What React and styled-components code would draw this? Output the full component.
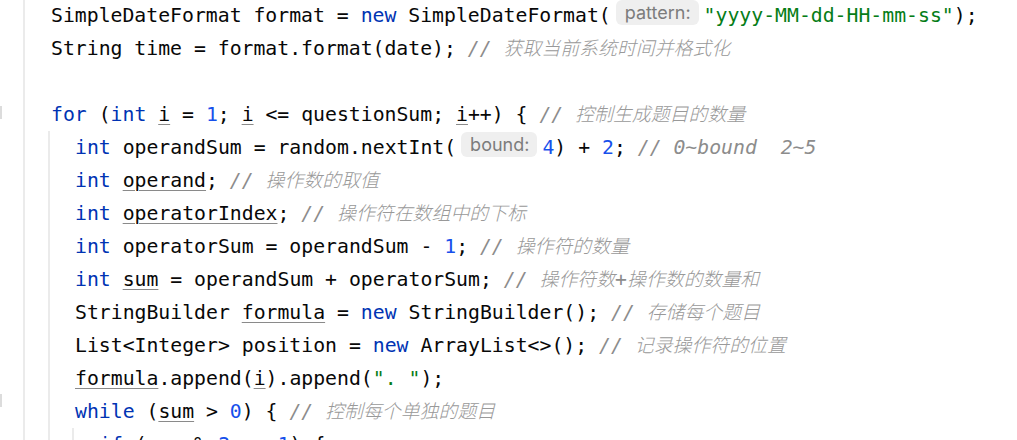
import styled, { createGlobalStyle } from "styled-components";

const GlobalStyle = createGlobalStyle`
  html, body {
    margin: 0;
    padding: 0;
    background: #fff;
  }
`;

const Editor = styled.div`
  display: flex;
  width: 1017px;
  height: 440px;
  overflow: hidden;
  background: #fff;
`;

const Gutter = styled.div`
  width: 23px;
  flex-shrink: 0;
  border-right: 2px solid #ebebeb;
  display: flex;
  flex-direction: column;
  margin-top: -1px;
`;

const GutterRow = styled.div`
  height: 33px;
  flex-shrink: 0;
  position: relative;
`;

const FoldMark = styled.span`
  position: absolute;
  left: 0;
  top: ${(p) => p.$top}px;
  width: 2px;
  height: 13px;
  background: #dcdcdc;
`;

const Code = styled.div`
  flex: 1;
  padding-left: 23px;
  margin-top: -1.5px;
  font-family: "DejaVu Sans Mono", "Noto Sans CJK SC", monospace;
  font-size: 19.8px;
  color: #080808;
`;

const Line = styled.div`
  height: 33px;
  line-height: 33px;
  padding-left: 3px;
  white-space: pre;
`;

const Block = styled.div`
  border-left: 2px solid #ebebeb;
  padding-left: 22px;
`;

const Kw = styled.span`
  color: #0033b3;
`;

const Num = styled.span`
  color: #1750eb;
`;

const Str = styled.span`
  color: #067d17;
`;

const Var = styled.span`
  text-decoration: underline;
  text-decoration-color: #8a8a8a;
  text-decoration-thickness: 1px;
  text-underline-offset: 3px;
`;

const Comment = styled.span`
  color: #8c8c8c;
  font-style: italic;
`;

const Cjk = styled.span`
  font-family: "Noto Sans CJK SC", sans-serif;
  font-size: 18.9px;
  font-weight: 300;
  line-height: 20px;
  color: #999;
`;

const Hint = styled.span`
  display: inline-block;
  margin: 0 5px;
  padding: 0 8px 0 9px;
  background: #efefef;
  border-radius: 6px;
  font-family: Inter, "Noto Sans", sans-serif;
  font-size: 18px;
  line-height: 25px;
  color: #7c7c7c;
  vertical-align: 3px;
`;

function Note({ children }) {
  const parts = children.split(/([\u4e00-\u9fff]+)/);
  return (
    <Comment>
      {parts.map((part, i) =>
        /[\u4e00-\u9fff]/.test(part) ? <Cjk key={i}>{part}</Cjk> : part
      )}
    </Comment>
  );
}

const gutterMarks = { 3: 8, 12: -1 };

export default function App() {
  return (
    <>
      <GlobalStyle />
      <Editor>
        <Gutter>
          {Array.from({ length: 14 }).map((_, i) => (
            <GutterRow key={i}>
              {gutterMarks[i] !== undefined && <FoldMark $top={gutterMarks[i]} />}
            </GutterRow>
          ))}
        </Gutter>
        <Code>
          <Line>
            SimpleDateFormat format = <Kw>new</Kw> SimpleDateFormat(
            <Hint>pattern:</Hint>
            <Str>"yyyy-MM-dd-HH-mm-ss"</Str>);
          </Line>
          <Line>
            String time = format.format(date); <Note>// 获取当前系统时间并格式化</Note>
          </Line>
          <Line> </Line>
          <Line>
            <Kw>for</Kw> (<Kw>int</Kw> <Var>i</Var> = <Num>1</Num>; <Var>i</Var> &lt;= questionSum;{" "}
            <Var>i</Var>++) {"{"} <Note>// 控制生成题目的数量</Note>
          </Line>
          <Block>
            <Line>
              <Kw>int</Kw> operandSum = random.nextInt(
              <Hint>bound:</Hint>
              <Num>4</Num>) + <Num>2</Num>; <Note>// 0~bound  2~5</Note>
            </Line>
            <Line>
              <Kw>int</Kw> <Var>operand</Var>; <Note>// 操作数的取值</Note>
            </Line>
            <Line>
              <Kw>int</Kw> <Var>operatorIndex</Var>; <Note>// 操作符在数组中的下标</Note>
            </Line>
            <Line>
              <Kw>int</Kw> operatorSum = operandSum - <Num>1</Num>; <Note>// 操作符的数量</Note>
            </Line>
            <Line>
              <Kw>int</Kw> <Var>sum</Var> = operandSum + operatorSum;{" "}
              <Note>// 操作符数+操作数的数量和</Note>
            </Line>
            <Line>
              StringBuilder <Var>formula</Var> = <Kw>new</Kw> StringBuilder();{" "}
              <Note>// 存储每个题目</Note>
            </Line>
            <Line>
              List&lt;Integer&gt; position = <Kw>new</Kw> ArrayList&lt;&gt;();{" "}
              <Note>// 记录操作符的位置</Note>
            </Line>
            <Line>
              <Var>formula</Var>.append(<Var>i</Var>).append(<Str>". "</Str>);
            </Line>
            <Line>
              <Kw>while</Kw> (<Var>sum</Var> &gt; <Num>0</Num>) {"{"} <Note>// 控制每个单独的题目</Note>
            </Line>
            <Block>
              <Line>
                <Kw>if</Kw> (<Var>sum</Var> % <Num>2</Num> == <Num>1</Num>) {"{"}
              </Line>
            </Block>
          </Block>
        </Code>
      </Editor>
    </>
  );
}
